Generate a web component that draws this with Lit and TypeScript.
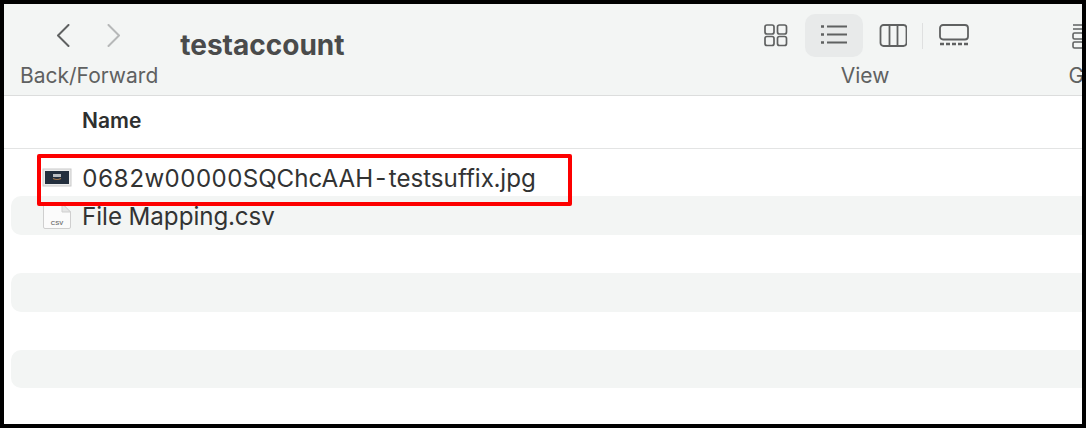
import { LitElement, html, css, svg } from "lit";
import { customElement } from "lit/decorators.js";

const FILES = ["0682w00000SQChcAAH-testsuffix.jpg", "File Mapping.csv", "", "", "", ""];

const imageIcon = svg`<svg class="file-icon" width="30" height="24" viewBox="0 0 30 24">
  <rect x="1" y="4" width="28" height="17" fill="#ececec" stroke="#c9c9c9" stroke-width="1"/>
  <rect x="3" y="6" width="24" height="13" fill="#232f3e"/>
  <rect x="11" y="9" width="8" height="3" fill="#b9bdc2"/>
  <path d="M11 13.5q4 2 8 0" fill="none" stroke="#a8784a" stroke-width="1.2"/>
</svg>`;

const csvIcon = svg`<svg class="file-icon" width="30" height="28" viewBox="0 0 30 28">
  <path d="M1.5 1.5H20L28.5 10V25a1.5 1.5 0 0 1-1.5 1.5H3A1.5 1.5 0 0 1 1.5 25Z" fill="#fbfbfb" stroke="#cfcfcf"/>
  <path d="M20 1.5V10H28.5Z" fill="#e6e6e6" stroke="#cfcfcf"/>
  <text x="15" y="22.5" class="csv">CSV</text>
</svg>`;

@customElement("app-root")
export class AppRoot extends LitElement {
  static styles = css`
    :host {
      display: block;
      width: 1086px;
      height: 428px;
      font-family: Inter, "Liberation Sans", sans-serif;
    }
    .frame {
      position: relative;
      box-sizing: border-box;
      width: 1086px;
      height: 428px;
      border: 4px solid #000;
      background: #fff;
      overflow: hidden;
    }
    .toolbar {
      display: flex;
      height: 92px;
      box-sizing: border-box;
      padding: 10px 0 0 16px;
      background: #f3f5f4;
      border-bottom: 1px solid #dcdddd;
      color: #5f6161;
    }
    .group {
      display: flex;
      flex-direction: column;
      align-items: center;
      font-size: 21px;
      line-height: 24px;
      flex: none;
    }
    .group .icons {
      display: flex;
      align-items: center;
      height: 43px;
      margin-bottom: 7px;
    }
    .nav .icons {
      gap: 28px;
      margin-left: -2px;
    }
    .title {
      font-size: 28px;
      font-weight: 700;
      color: #4a4b4b;
      line-height: 32px;
      margin: 15px 0 0 22px;
      flex: none;
    }
    .view {
      margin-left: 402px;
      width: 237px;
    }
    .view .icons {
      align-self: flex-start;
    }
    .view-btn {
      display: flex;
      align-items: center;
      justify-content: center;
      width: 58px;
      height: 43px;
      border-radius: 10px;
    }
    .view-btn.on {
      background: #e8eaea;
    }
    .sep {
      width: 1px;
      height: 26px;
      background: #dfe0e0;
      margin: 0 2px 0 1px;
    }
    .group-by {
      margin-left: 85px;
      align-items: flex-start;
    }
    .group-by .icons {
      margin-left: 3px;
    }
    .head {
      height: 53px;
      box-sizing: border-box;
      padding: 13px 0 0 78px;
      border-bottom: 1px solid #e3e4e4;
      font-size: 21px;
      font-weight: 600;
      line-height: 24px;
      color: #2e2f2f;
    }
    .rows {
      padding: 9px 0 0 7px;
    }
    .row {
      display: flex;
      align-items: center;
      height: 38.4px;
      padding-left: 31px;
      border-radius: 10px 0 0 10px;
      font-size: 24.15px;
      font-variant-numeric: tabular-nums;
      color: #323333;
    }
    .row:nth-child(even) {
      background: #f3f5f4;
    }
    .name {
      margin-top: 2px;
    }
    .icon-slot {
      width: 40px;
      flex: none;
      display: flex;
      align-items: center;
    }
    .file-icon {
      flex: none;
    }
    .csv {
      font-size: 6px;
      font-weight: 700;
      fill: #777;
      text-anchor: middle;
      font-family: "Liberation Sans", sans-serif;
    }
    .highlight {
      position: absolute;
      left: 33px;
      top: 150px;
      width: 535px;
      height: 52px;
      box-sizing: border-box;
      border: 4px solid #fd0000;
      border-radius: 2px;
    }
  `;

  render() {
    return html`
      <div class="frame">
        <div class="toolbar">
          <div class="group nav">
            <div class="icons">
              <svg width="22" height="24" viewBox="0 0 22 24" fill="none" stroke="#5f6161" stroke-width="2" stroke-linecap="round" stroke-linejoin="round"><path d="M16.5 1 6 11.5 16.5 22"/></svg>
              <svg width="22" height="24" viewBox="0 0 22 24" fill="none" stroke="#b6b8b8" stroke-width="2" stroke-linecap="round" stroke-linejoin="round"><path d="M6.5 1 17 11.5 6.5 22"/></svg>
            </div>
            <div>Back/Forward</div>
          </div>
          <div class="title">testaccount</div>
          <div class="group view">
            <div class="icons">
              <div class="view-btn">
                <svg width="24" height="24" viewBox="0 0 24 24" fill="none" stroke="#5f6161" stroke-width="1.7"><rect x="1" y="1" width="9" height="9" rx="2"/><rect x="13.5" y="1" width="9" height="9" rx="2"/><rect x="1" y="12.5" width="9" height="9" rx="2"/><rect x="13.5" y="12.5" width="9" height="9" rx="2"/></svg>
              </div>
              <div class="view-btn on">
                <svg width="28" height="22" viewBox="0 0 28 22" fill="none" stroke="#5f6161" stroke-width="1.8"><path d="M1 1.5h3M1 9.5h3M1 17.5h3" stroke-width="2.4"/><path d="M7 1.5h20M7 9.5h20M7 17.5h20"/></svg>
              </div>
              <div class="view-btn">
                <svg width="30" height="24" viewBox="0 0 30 24" fill="none" stroke="#5f6161" stroke-width="1.8"><rect x="3.5" y="1" width="26" height="21" rx="3"/><path d="M12.5 1v21M20.5 1v21"/></svg>
              </div>
              <div class="sep"></div>
              <div class="view-btn">
                <svg width="30" height="24" viewBox="0 0 30 24" fill="none" stroke="#5f6161" stroke-width="1.8"><rect x="1" y="1" width="28" height="14.5" rx="3"/><path d="M1 20h28" stroke-width="2.6" stroke-dasharray="4 2"/></svg>
              </div>
            </div>
            <div>View</div>
          </div>
          <div class="group group-by">
            <div class="icons">
              <svg width="12" height="26" viewBox="0 0 12 26" fill="none" stroke="#5f6161" stroke-width="1.6"><path d="M1 2h10M1 6h10"/><rect x="1" y="10" width="10" height="6" rx="1.5"/><rect x="1" y="19" width="10" height="6" rx="1.5"/></svg>
            </div>
            <div>G</div>
          </div>
        </div>
        <div class="head">Name</div>
        <div class="rows">
          ${FILES.map((name, i) => html`
            <div class="row">
              ${name ? html`<div class="icon-slot">${i === 0 ? imageIcon : csvIcon}</div><span class="name">${name}</span>` : ""}
            </div>
          `)}
        </div>
        <div class="highlight"></div>
      </div>
    `;
  }
}
